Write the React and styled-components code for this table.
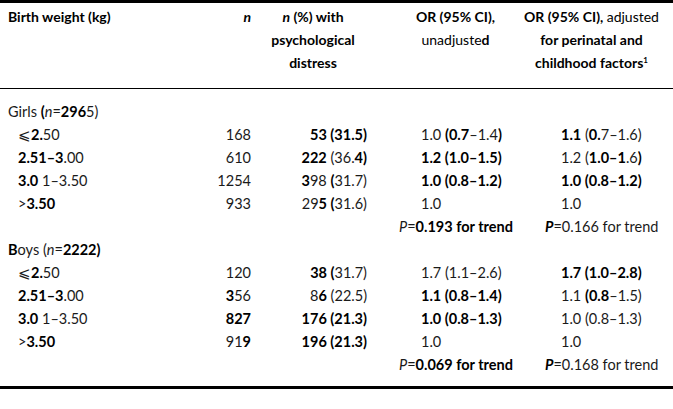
import React from 'react'
import { styled, createGlobalStyle } from 'styled-components'

const GlobalStyle = createGlobalStyle`
  html, body {
    margin: 0;
    padding: 0;
    background: #ffffff;
  }
  body {
    font-family: Lato, 'Open Sans', 'Liberation Sans', sans-serif;
    font-size: 14.5px;
    color: #1a1a1a;
  }
`

const Table = styled.div`
  width: 673px;
  border-top: 3px solid #000;
  border-bottom: 3px solid #000;
  box-sizing: border-box;
`

const Head = styled.div`
  display: grid;
  grid-template-columns: 190px 61px 116px 143px 163px;
  line-height: 23px;
  font-size: 14px;
  padding: 2px 0 14px;
  border-bottom: 1px solid #000;
  font-weight: 700;
  color: #000;
`

const Body = styled.div`
  padding: 11px 0 10px;
`

const Row = styled.div`
  display: grid;
  grid-template-columns: 190px 61px 116px 143px 163px;
  height: 23px;
  line-height: 23px;
  white-space: nowrap;
`

const HeadCell = styled.div`
  text-align: ${(p) => p.$align || 'center'};
  padding: ${(p) => p.$pad || '0'};
  white-space: nowrap;
`

const Label = styled.div`
  padding-left: ${(p) => (p.$indent ? 18 : 8)}px;
`

const Num = styled.div`
  display: flex;
  justify-content: flex-end;
`

const Odds = styled.div`
  padding-left: ${(p) => p.$pl}px;
`

const Light = styled.span`
  font-weight: 400;
`

const B = styled.b`
  font-weight: 700;
  color: #000;
`

const I = styled.i`
  font-style: italic;
`

const Sup = styled.sup`
  font-size: 8px;
  line-height: 0;
  vertical-align: 5px;
`

function Header() {
  return (
    <Head>
      <HeadCell $align="left" $pad="0 0 0 8px">Birth weight (kg)</HeadCell>
      <HeadCell $align="right"><I>n</I></HeadCell>
      <HeadCell $pad="0 0 0 8px">
        <div><I>n</I> (%) with</div>
        <div>psychological</div>
        <div>distress</div>
      </HeadCell>
      <HeadCell $pad="0 14px 0 48px">
        <div>OR (95% CI),</div>
        <div><Light>unadjuste</Light>d</div>
      </HeadCell>
      <HeadCell>
        <div>OR (95% CI), <Light>adjusted</Light></div>
        <div>for perinatal and</div>
        <div>childhood factors<Sup>1</Sup></div>
      </HeadCell>
    </Head>
  )
}

function DataRow({ label, indent, n, pct, or1, or2 }) {
  return (
    <Row>
      <Label $indent={indent}>{label}</Label>
      <Num><span>{n}</span></Num>
      <Num><span>{pct}</span></Num>
      <Odds $pl={54}>{or1}</Odds>
      <Odds $pl={51}>{or2}</Odds>
    </Row>
  )
}

function TrendRow({ p1, p2 }) {
  return (
    <Row>
      <Label />
      <Num />
      <Num />
      <Odds $pl={32}>{p1}</Odds>
      <Odds $pl={35}>{p2}</Odds>
    </Row>
  )
}

const le = '\u2A7D'

export default function App() {
  return (
    <>
      <GlobalStyle />
      <Table>
        <Header />
        <Body>
          <Row>
            <Label>
              Girls <B>(</B><I>n</I>=<B>296</B>5)
            </Label>
          </Row>
          <DataRow
            indent
            label={<>{le}<B>2.</B>50</>}
            n="168"
            pct={<B>53 (31.5)</B>}
            or1={<>1.0 <B>(0.7</B>–1.4<B>)</B></>}
            or2={<><B>1.1</B> (<B>0.</B>7–1.6)</>}
          />
          <DataRow
            indent
            label={<><B>2.51–3</B>.00</>}
            n="610"
            pct={<><B>222</B> (36.<B>4)</B></>}
            or1={<B>1.2 (1.0–1.5)</B>}
            or2={<>1.2 (<B>1.0–1</B>.6<B>)</B></>}
          />
          <DataRow
            indent
            label={<><B>3.0</B> 1–3.50</>}
            n="1254"
            pct={<><B>3</B>98 <B>(</B>31.7)</>}
            or1={<B>1.0 (0.8–1.2)</B>}
            or2={<B>1.0 (0.8–1.2)</B>}
          />
          <DataRow
            indent
            label={<>&gt;<B>3.50</B></>}
            n="933"
            pct={<>29<B>5 (</B>31.6)</>}
            or1="1.0"
            or2="1.0"
          />
          <TrendRow
            p1={<><I>P</I>=<B>0.193 for trend</B></>}
            p2={<><B><I>P</I></B>=0.166 for trend</>}
          />
          <Row>
            <Label>
              <B>B</B>oys (<I>n</I>=<B>2222)</B>
            </Label>
          </Row>
          <DataRow
            indent
            label={<>{le}<B>2.</B>50</>}
            n="120"
            pct={<><B>38 (</B>31.7)</>}
            or1="1.7 (1.1–2.6)"
            or2={<B>1.7 (1.0–2.8)</B>}
          />
          <DataRow
            indent
            label={<><B>2.51–3</B>.00</>}
            n={<><B>3</B>56</>}
            pct={<>8<B>6</B> (22.5)</>}
            or1={<B>1.1 (0.8–1.4)</B>}
            or2={<>1.1 <B>(0.8</B>–1.5)</>}
          />
          <DataRow
            indent
            label={<><B>3.0</B> 1–3.50</>}
            n={<B>827</B>}
            pct={<B>176 (21.3)</B>}
            or1={<B>1.0 (0.8–1.3)</B>}
            or2="1.0 (0.8–1.3)"
          />
          <DataRow
            indent
            label={<>&gt;<B>3.50</B></>}
            n={<>91<B>9</B></>}
            pct={<B>196 (21.3)</B>}
            or1="1.0"
            or2="1.0"
          />
          <TrendRow
            p1={<><I>P</I>=<B>0.069 for trend</B></>}
            p2={<><B><I>P</I></B>=0.168 for trend</>}
          />
        </Body>
      </Table>
    </>
  )
}
